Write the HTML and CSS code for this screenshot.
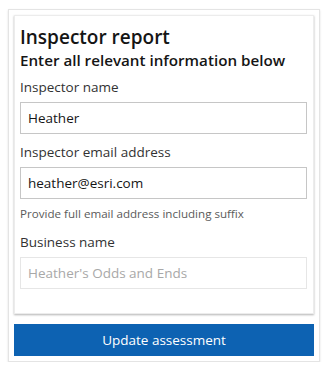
FILE: index.html
```html
<!DOCTYPE html>
<html>
<head>
<meta charset="utf-8">
<link rel="stylesheet" href="styles.css">
</head>
<body>
<div class="panel">
  <div class="card">
    <h1 class="title">Inspector report</h1>
    <h2 class="subtitle">Enter all relevant information below</h2>
    <div class="field">
      <label class="label">Inspector name</label>
      <div class="input">Heather</div>
    </div>
    <div class="field">
      <label class="label">Inspector email address</label>
      <div class="input">heather@esri.com</div>
      <div class="hint">Provide full email address including suffix</div>
    </div>
    <div class="field">
      <label class="label">Business name</label>
      <div class="input disabled">Heather's Odds and Ends</div>
    </div>
  </div>
  <button class="btn">Update assessment</button>
</div>
</body>
</html>
```
FILE: styles.css
```css
* { box-sizing: border-box; }
html, body { margin: 0; padding: 0; background: #fff; }
body { font-family: "Open Sans", Lato, sans-serif; color: #323232; }
.panel {
  margin: 9px 7px 0 8px;
  width: 312px;
  border: 1px solid #e4e4e4;
  box-shadow: 0 1px 2px rgba(0,0,0,0.12);
  padding: 5px 5px 5px;
  display: flex;
  flex-direction: column;
  gap: 10px;
}
.card {
  background: #fff;
  box-shadow: 0 1px 2px rgba(0,0,0,0.3);
  border: 1px solid #ececec;
  padding: 9px 6px 24px 5px;
  display: flex;
  flex-direction: column;
}
.title {
  margin: 0;
  font-size: 19px;
  line-height: 25px;
  font-weight: 600;
  color: #151515;
}
.subtitle {
  margin: 0 0 7px;
  font-size: 15.2px;
  line-height: 20px;
  font-weight: 600;
  color: #151515;
}
.field { display: flex; flex-direction: column; margin-bottom: 8px; }
.field:last-child { margin-bottom: 0; }
.label {
  font-size: 13.5px;
  line-height: 20px;
  margin-bottom: 5px;
  color: #323232;
}
.input {
  height: 32px;
  border: 1px solid #c6c6c6;
  padding: 0 7px;
  font-size: 13.5px;
  line-height: 30px;
  color: #151515;
  background: #fff;
}
.input.disabled { border-color: #e6e6e6; color: #a8a8a8; }
.hint {
  margin-top: 7px;
  font-size: 11.6px;
  line-height: 16px;
  color: #5a5a5a;
  margin-bottom: 2px;
}
.btn {
  height: 32px;
  border: 0;
  background: #0d62b2;
  color: #fff;
  font-family: "Open Sans", Lato, sans-serif;
  font-size: 13.5px;
  padding: 0;
}
```
